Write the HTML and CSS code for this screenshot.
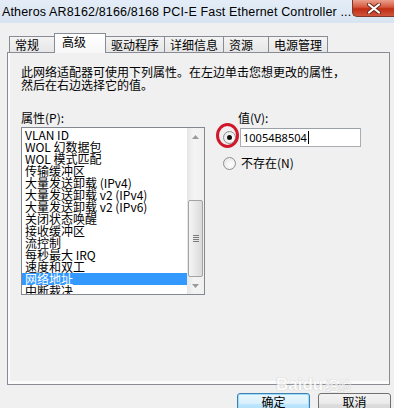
FILE: index.html
```html
<!DOCTYPE html>
<html>
<head>
<meta charset="utf-8">
<link rel="stylesheet" href="styles.css">
</head>
<body>
<div class="window">
  <div class="titlebar">
    <span class="title">Atheros AR8162/8166/8168 PCI-E Fast Ethernet Controller ...</span>
    <div class="close">
      <svg width="14" height="11" viewBox="0 0 14 11"><path d="M2 1.5 L12 9.5 M12 1.5 L2 9.5" stroke="#6b2a1e" stroke-width="4" stroke-linecap="round"/><path d="M2 1.5 L12 9.5 M12 1.5 L2 9.5" stroke="#fff" stroke-width="2.2" stroke-linecap="round"/></svg>
    </div>
  </div>
  <div class="client">
    <div class="tabs">
      <div class="tab">常规</div>
      <div class="tab active">高级</div>
      <div class="tab">驱动程序</div>
      <div class="tab">详细信息</div>
      <div class="tab">资源</div>
      <div class="tab">电源管理</div>
    </div>
    <div class="panel">
      <p class="desc">此网络适配器可使用下列属性。在左边单击您想更改的属性，<br>然后在右边选择它的值。</p>
      <div class="cols">
        <div class="left">
          <div class="label">属性(P):</div>
          <div class="listbox">
            <ul class="items">
              <li>VLAN ID</li>
              <li>WOL 幻数据包</li>
              <li>WOL 模式匹配</li>
              <li>传输缓冲区</li>
              <li>大量发送卸载 (IPv4)</li>
              <li>大量发送卸载 v2 (IPv4)</li>
              <li>大量发送卸载 v2 (IPv6)</li>
              <li>关闭状态唤醒</li>
              <li>接收缓冲区</li>
              <li>流控制</li>
              <li>每秒最大 IRQ</li>
              <li>速度和双工</li>
              <li class="selected">网络地址</li>
              <li>中断裁决</li>
            </ul>
            <div class="scrollbar">
              <div class="arrow"><svg width="7" height="4" viewBox="0 0 7 4"><polygon points="0,4 3.5,0 7,4" fill="#9a9a9a"/></svg></div>
              <div class="track-top"></div>
              <div class="thumb"><span class="grip"></span></div>
              <div class="track-rest"></div>
              <div class="arrow"><svg width="7" height="4" viewBox="0 0 7 4"><polygon points="0,0 7,0 3.5,4" fill="#9a9a9a"/></svg></div>
            </div>
          </div>
        </div>
        <div class="right">
          <div class="label vlabel">值(V):</div>
          <div class="row row1">
            <span class="radio checked"></span>
            <div class="input">10054B8504<span class="caret"></span></div>
            <span class="ring"></span>
          </div>
          <div class="row row2">
            <span class="radio"></span>
            <span class="opt">不存在(N)</span>
          </div>
        </div>
      </div>
    </div>
    <div class="buttons">
      <div class="btn default">确定</div>
      <div class="btn">取消</div>
    </div>
    <div class="watermark"><span class="wm-en">Baidu</span><span class="wm-cn">经验</span></div>
  </div>
</div>
</body>
</html>
```
FILE: styles.css
```css
html, body {
  margin: 0;
  padding: 0;
}
body {
  width: 394px;
  height: 408px;
  overflow: hidden;
  background: #f0f0f0;
  font-family: "Noto Sans CJK SC", "Noto Sans", sans-serif;
  font-size: 12px;
  color: #000;
}
.window {
  position: relative;
  height: 408px;
}
.titlebar {
  height: 23px;
  display: flex;
  align-items: flex-start;
  background: linear-gradient(#e4edf7, #d8e4f1);
}
.title {
  font-family: "Liberation Sans", Arial, sans-serif;
  font-size: 12.5px;
  letter-spacing: 0.15px;
  line-height: 24px;
  padding-left: 2px;
  color: #000;
  white-space: nowrap;
}
.close {
  margin-left: auto;
  width: 42px;
  height: 17px;
  flex: none;
  box-sizing: border-box;
  border: 1px solid #7d3a2c;
  border-top: none;
  border-right: none;
  border-radius: 0 0 0 5px;
  background: linear-gradient(#eba08c, #d5553b 45%, #c02d14 55%, #d0543a);
  display: flex;
  align-items: center;
  justify-content: center;
}
.client {
  padding: 10px 4px 0 7px;
  background: #f0f0f0;
}
.tabs {
  position: relative;
  z-index: 1;
  display: flex;
  align-items: flex-start;
  height: 20px;
  margin-bottom: -1px;
  padding-left: 2px;
}
.tab {
  box-sizing: border-box;
  height: 16px;
  margin-top: 3px;
  margin-right: -1px;
  min-width: 46px;
  padding: 0 5px;
  border: 1px solid #898c95;
  border-bottom: none;
  line-height: 15px;
  font-size: 12px;
  background: linear-gradient(#f3f3f3, #e6e6e6);
  white-space: nowrap;
}
.tab.active {
  margin-top: 0;
  height: 20px;
  min-width: 52px;
  padding: 0 7px;
  background: linear-gradient(#ffffff, #f6f6f6);
  position: relative;
  z-index: 2;
}
.panel {
  box-sizing: border-box;
  height: 333px;
  border: 1px solid #898c95;
  background: #f0f0f0;
  box-shadow: inset 2px 0 0 #fbfbfb, inset 0 -3px 0 #fbfbfb;
  padding: 12px 0 0 13px;
}
.desc {
  margin: 0;
  line-height: 13px;
  white-space: nowrap;
}
.cols {
  display: flex;
  margin-top: 20px;
}
.label {
  line-height: 13px;
  height: 13px;
}
.listbox {
  box-sizing: border-box;
  width: 184px;
  height: 168px;
  margin-top: 3px;
  border: 1px solid #828790;
  background: #fff;
  display: flex;
}
.items {
  flex: 1;
  list-style: none;
  margin: 0;
  padding: 1px 0 0 0;
  overflow: hidden;
}
.items li {
  height: 12px;
  line-height: 12px;
  padding-left: 3px;
  white-space: nowrap;
}
.items li.selected {
  background: #3399ff;
  color: #fff;
}
.scrollbar {
  width: 17px;
  display: flex;
  flex-direction: column;
  background: linear-gradient(90deg, #e6e6e6, #f4f4f4 40%, #f0f0f0);
}
.arrow {
  height: 17px;
  display: flex;
  align-items: center;
  justify-content: center;
}
.track-top {
  flex: 0 0 55px;
}
.thumb {
  box-sizing: border-box;
  flex: 0 0 77px;
  margin: 0 1px;
  border: 1px solid #a3a3a3;
  border-radius: 2px;
  background: linear-gradient(90deg, #f5f5f5, #e8e8e8 50%, #dadada);
  display: flex;
  align-items: center;
  justify-content: center;
}
.grip {
  width: 6px;
  height: 7px;
  background: repeating-linear-gradient(#7c7c7c 0 1px, transparent 1px 2px);
}
.track-rest {
  flex: 1;
}
.right {
  margin-left: 18px;
}
.vlabel {
  padding-left: 15px;
}
.row {
  display: flex;
  align-items: center;
  position: relative;
}
.row1 {
  margin-top: 4px;
  height: 19px;
}
.row2 {
  margin-top: 9px;
  height: 14px;
}
.radio {
  box-sizing: border-box;
  width: 13px;
  height: 13px;
  border: 1px solid #8e8f8f;
  border-radius: 50%;
  background: radial-gradient(circle at 60% 60%, #ffffff, #e2e2e2);
  display: flex;
  align-items: center;
  justify-content: center;
  flex: none;
}
.radio.checked::after {
  content: "";
  width: 5px;
  height: 5px;
  border-radius: 50%;
  background: #111;
}
.input {
  box-sizing: border-box;
  margin-left: 4px;
  width: 121px;
  height: 19px;
  border: 1px solid #abadb3;
  border-top-color: #9aa0a8;
  background: #fff;
  font-size: 11px;
  line-height: 17px;
  padding-left: 2px;
  display: flex;
  align-items: center;
  font-family: "Noto Sans", sans-serif;
}
.caret {
  width: 1px;
  height: 13px;
  background: #000;
  margin-left: 1px;
}
.ring {
  position: absolute;
  left: -7px;
  top: -5px;
  width: 23px;
  height: 25px;
  box-sizing: border-box;
  border: 3px solid #d0182a;
  border-radius: 50%;
}
.opt {
  margin-left: 5px;
  line-height: 14px;
}
.buttons {
  display: flex;
  justify-content: flex-end;
  gap: 8px;
  padding-top: 8px;
  margin-right: -1px;
}
.btn {
  box-sizing: border-box;
  width: 73px;
  height: 23px;
  border: 1px solid #707070;
  border-radius: 3px;
  background: linear-gradient(#f2f2f2, #ebebeb 45%, #dddddd 50%, #cfcfcf);
  text-align: center;
  line-height: 15px;
  font-size: 12px;
}
.btn.default {
  border-color: #3c7fb1;
  background: linear-gradient(#eaf6fd, #d9f0fc 45%, #bee6fd 50%, #a7d9f5);
  box-shadow: inset 0 0 0 1px #9fdcf8;
}
.watermark {
  position: absolute;
  left: 276px;
  top: 375px;
  display: flex;
  align-items: baseline;
  gap: 2px;
  opacity: 0.75;
  pointer-events: none;
}
.wm-en {
  font-family: "Liberation Sans", Arial, sans-serif;
  font-weight: bold;
  font-size: 17px;
  color: #ffffff;
  text-shadow: 0 0 1px #b8b8b8, 0 0 1px #b8b8b8;
}
.wm-cn {
  font-size: 13px;
  color: #ffffff;
  text-shadow: 0 0 1px #b8b8b8, 0 0 1px #b8b8b8;
}
```
